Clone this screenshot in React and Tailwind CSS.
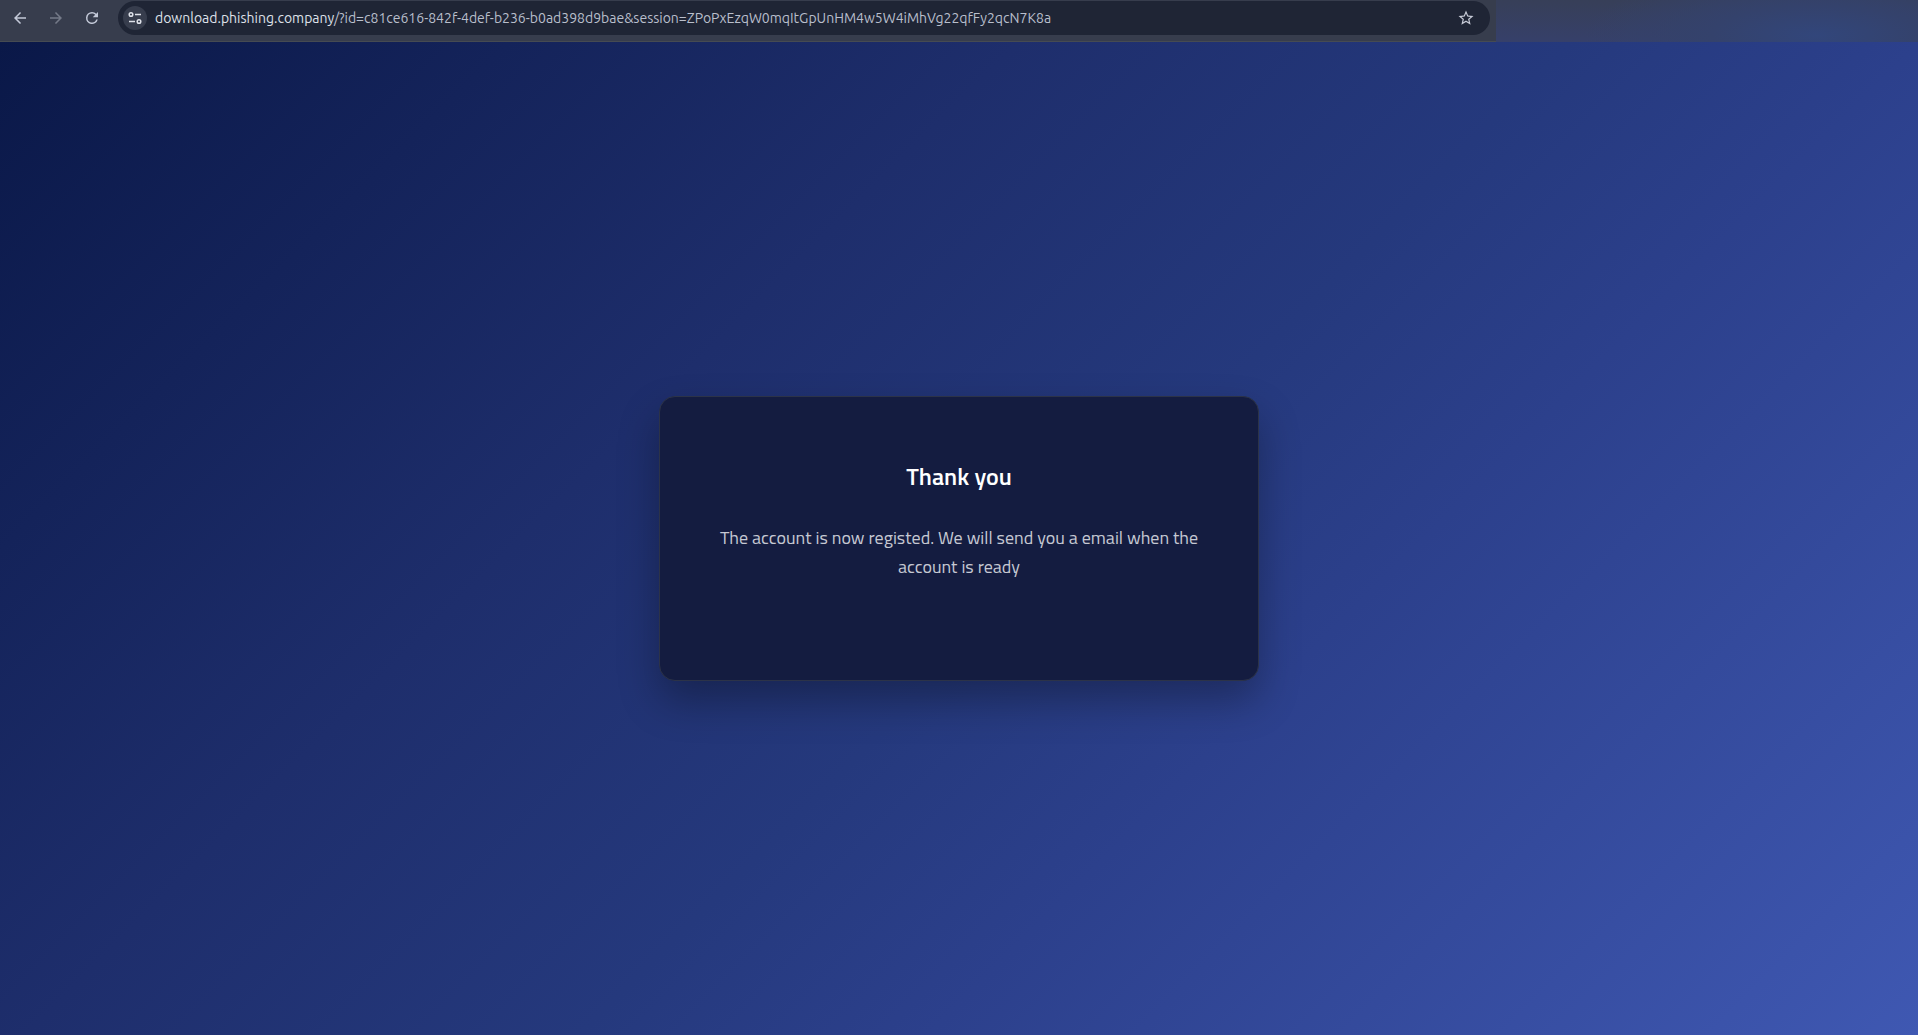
import React from "react";

const SESSION_QUERY =
  "/?id=c81ce616-842f-4def-b236-b0ad398d9bae&session=ZPoPxEzqW0mqItGpUnHM4w5W4iMhVg22qfFy2qcN7K8a";

function ToolButton({ label, disabled, className, children }) {
  return (
    <button
      type="button"
      aria-label={label}
      disabled={disabled}
      className={`flex size-9 items-center justify-center rounded-full ${className}`}
    >
      <svg viewBox="0 0 24 24" className="size-[18px]" fill="currentColor" aria-hidden="true">
        {children}
      </svg>
    </button>
  );
}

function BrowserBar() {
  return (
    <header className="flex">
      <div className="flex h-[42px] min-w-0 flex-[78] items-start border-b border-[#464b52] bg-[#373d4d]">
        <nav aria-label="Browser" className="flex pl-[2px]">
          <ToolButton label="Back" className="text-[#c3c9d8]">
            <path d="M20 11H7.83l5.59-5.59L12 4l-8 8 8 8 1.41-1.41L7.83 13H20v-2z" />
          </ToolButton>
          <ToolButton label="Forward" disabled className="text-[#747a88]">
            <path d="M12 4l-1.41 1.41L16.17 11H4v2h12.17l-5.58 5.59L12 20l8-8z" />
          </ToolButton>
          <ToolButton label="Reload" className="text-[#c3c9d8]">
            <path d="M17.65 6.35A7.96 7.96 0 0 0 12 4a8 8 0 1 0 7.73 10h-2.08A6 6 0 1 1 12 6c1.66 0 3.14.69 4.22 1.78L13 11h7V4l-2.35 2.35z" />
          </ToolButton>
        </nav>
        <div className="mt-px mr-[6px] ml-2 flex h-[34px] min-w-0 flex-1 items-center rounded-full bg-[#1f2535] pr-3 pl-[5px]">
          <button
            type="button"
            aria-label="View site information"
            className="flex size-6 shrink-0 items-center justify-center rounded-full bg-[#373d4d] text-[#dfe2ea]"
          >
            <svg viewBox="0 0 16 16" className="size-4" fill="none" stroke="currentColor" strokeWidth="1.5" aria-hidden="true">
              <circle cx="4" cy="4.5" r="1.8" />
              <path d="M8 4.5h6M2 11.5h6" />
              <circle cx="12" cy="11.5" r="1.8" />
            </svg>
          </button>
          <p className="ml-2 min-w-0 flex-1 truncate font-['Ubuntu','Noto_Sans',sans-serif] text-[14px] leading-5 text-[#b9bfcc]">
            <span className="text-[#dfe2ea]">download.phishing.company</span>
            {SESSION_QUERY}
          </p>
          <button type="button" aria-label="Bookmark this page" className="flex size-6 shrink-0 items-center justify-center text-[#c8ccd8]">
            <svg viewBox="0 0 24 24" className="size-[18px]" fill="currentColor" aria-hidden="true">
              <path d="M22 9.24l-7.19-.62L12 2 9.19 8.63 2 9.24l5.46 4.73L5.82 21 12 17.27 18.18 21l-1.63-7.03L22 9.24zM12 15.4l-3.76 2.27 1-4.28-3.32-2.88 4.38-.38L12 6.1l1.71 4.04 4.38.38-3.32 2.88 1 4.28L12 15.4z" />
            </svg>
          </button>
        </div>
      </div>
      <div className="flex-[22] bg-[radial-gradient(ellipse_55%_160%_at_76%_85%,#32467b_0%,#34426c_45%,transparent_100%),linear-gradient(180deg,#373f58_0%,#36406a_100%)]" />
    </header>
  );
}

export default function App() {
  return (
    <div className="flex min-h-screen flex-col">
      <BrowserBar />
      <main className="flex flex-1 items-center justify-center bg-[linear-gradient(135deg,#0a1848_0%,#1e2e6c_35%,#25397d_54%,#2c408c_66%,#3f58b2_100%)] p-6">
        <section className="w-full max-w-[600px] rounded-2xl border border-[#2c3348] bg-[#141c40] px-12 pt-14 pb-[99px] text-center font-['Titillium_Web',Roboto,sans-serif] shadow-[0_20px_40px_rgba(0,0,0,0.3)]">
          <h1 className="text-2xl leading-[46px] font-semibold text-white">Thank you</h1>
          <p className="mt-6 text-lg leading-[29px] text-[#c6c9d3]">
            The account is now registed. We will send you a email when the account is ready
          </p>
        </section>
      </main>
    </div>
  );
}
